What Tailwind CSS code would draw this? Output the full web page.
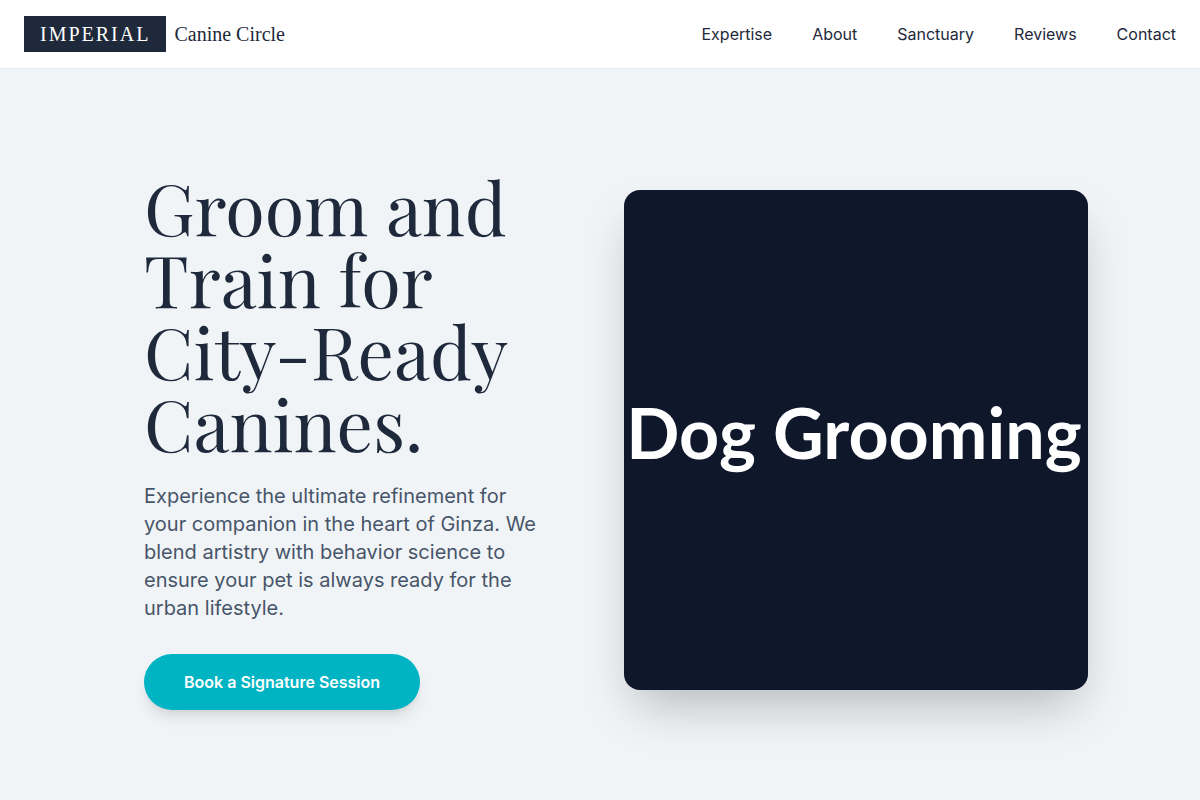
<!DOCTYPE html>
<html lang="en">
<head>
  <meta charset="UTF-8" />
  <meta name="viewport" content="width=device-width, initial-scale=1.0" />
  <title>Imperial Canine Circle</title>
  <script src="https://cdn.jsdelivr.net/npm/@tailwindcss/browser@4"></script>
</head>
<body class="bg-[#f0f4f7] text-[#1e293b] font-['Inter',sans-serif]">
  <!-- Header -->
  <header class="fixed top-0 inset-x-0 z-10 bg-white border-b border-slate-200">
    <nav class="flex items-center justify-between px-6 py-4">
      <a href="#" class="flex items-center gap-2 text-xl font-['Liberation_Serif',serif]">
        <span class="bg-[#1e293b] text-white px-4 py-1 tracking-widest">IMPERIAL</span>
        <span>Canine Circle</span>
      </a>
      <div class="flex gap-10">
        <a href="#expertise">Expertise</a>
        <a href="#about">About</a>
        <a href="#sanctuary">Sanctuary</a>
        <a href="#reviews">Reviews</a>
        <a href="#contact">Contact</a>
      </div>
    </nav>
  </header>

  <!-- Hero -->
  <main class="min-h-screen pt-20 flex items-center">
    <section class="w-full max-w-[1024px] mx-auto px-6 grid md:grid-cols-2 gap-12 items-center">
      <div class="p-8">
        <h1 class="text-7xl leading-none mb-6 font-['Playfair_Display','Liberation_Serif',serif]">Groom and Train for City-Ready Canines.</h1>
        <p class="text-xl text-[#475569] mb-8">Experience the ultimate refinement for your companion in the heart of Ginza. We blend artistry with behavior science to ensure your pet is always ready for the urban lifestyle.</p>
        <button class="bg-[#00b4c4] text-white font-semibold px-10 py-4 rounded-full shadow-lg">Book a Signature Session</button>
      </div>
      <div class="h-[500px] pb-4 pr-1 bg-[#0f172a] rounded-2xl shadow-2xl flex items-center justify-center">
        <span class="text-white text-[70px] font-bold whitespace-nowrap font-['Lato',sans-serif]">Dog Grooming</span>
      </div>
    </section>
  </main>
</body>
</html>
